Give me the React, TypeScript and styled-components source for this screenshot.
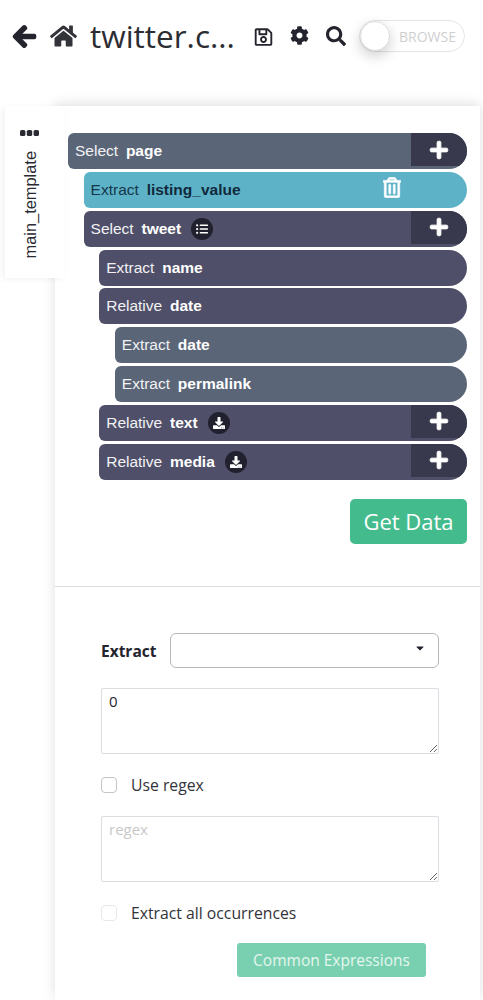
import styled, { createGlobalStyle } from "styled-components";
import {
  FaArrowLeft,
  FaCaretDown,
  FaCog,
  FaDownload,
  FaHome,
  FaListUl,
  FaPlus,
  FaRegSave,
  FaRegTrashAlt,
  FaSearch,
} from "react-icons/fa";

type RowType = {
  kind: string;
  name: string;
  level: number;
  tone?: "slate" | "indigo" | "teal";
  badge?: "list" | "download";
  canAdd?: boolean;
  canDelete?: boolean;
};

const rows: RowType[] = [
  { kind: "Select", name: "page", level: 0, tone: "slate", canAdd: true },
  { kind: "Extract", name: "listing_value", level: 1, tone: "teal", canDelete: true },
  { kind: "Select", name: "tweet", level: 1, badge: "list", canAdd: true },
  { kind: "Extract", name: "name", level: 2 },
  { kind: "Relative", name: "date", level: 2 },
  { kind: "Extract", name: "date", level: 3, tone: "slate" },
  { kind: "Extract", name: "permalink", level: 3, tone: "slate" },
  { kind: "Relative", name: "text", level: 2, badge: "download", canAdd: true },
  { kind: "Relative", name: "media", level: 2, badge: "download", canAdd: true },
];

const toneColors = {
  slate: "#5a6678",
  indigo: "#4f4f69",
  teal: "#5db2c8",
};

export default function App() {
  return (
    <>
      <GlobalStyle />
      <Header>
        <BackIcon />
        <HomeIcon />
        <Title>twitter.c...</Title>
        <SaveIcon />
        <CogIcon />
        <SearchIcon />
        <BrowseToggle>
          <ToggleKnob />
          <span>BROWSE</span>
        </BrowseToggle>
      </Header>
      <Workspace>
        <TemplateTab>
          <TabDots viewBox="0 0 19 6">
            <rect x="0" y="0" width="5.4" height="6" rx="1.6" />
            <rect x="6.8" y="0" width="5.4" height="6" rx="1.6" />
            <rect x="13.6" y="0" width="5.4" height="6" rx="1.6" />
          </TabDots>
          <span>main_template</span>
        </TemplateTab>
        <Panel>
          <TreeSection>
            <RowList>
              {rows.map((row) => (
                <Row
                  key={row.kind + row.name + row.level}
                  $level={row.level}
                  $tone={row.tone || "indigo"}
                >
                  <RowLabel $dark={row.tone === "teal"}>
                    {row.kind} <b>{row.name}</b>
                  </RowLabel>
                  {row.badge && (
                    <Badge>
                      {row.badge === "list" ? <FaListUl /> : <FaDownload />}
                    </Badge>
                  )}
                  {row.canDelete && (
                    <DeleteButton>
                      <FaRegTrashAlt />
                    </DeleteButton>
                  )}
                  {row.canAdd && (
                    <AddButton>
                      <FaPlus />
                    </AddButton>
                  )}
                </Row>
              ))}
            </RowList>
            <GetDataButton>Get Data</GetDataButton>
          </TreeSection>
          <FormSection>
            <ExtractRow>
              <strong>Extract</strong>
              <SelectBox>
                <FaCaretDown />
              </SelectBox>
            </ExtractRow>
            <TextBox defaultValue="0" />
            <CheckRow>
              <CheckBox type="checkbox" />
              <span>Use regex</span>
            </CheckRow>
            <TextBox placeholder="regex" />
            <CheckRow>
              <CheckBox type="checkbox" $faint />
              <span>Extract all occurrences</span>
            </CheckRow>
            <CommonButton>Common Expressions</CommonButton>
          </FormSection>
        </Panel>
      </Workspace>
    </>
  );
}

const GlobalStyle = createGlobalStyle`
  html, body {
    margin: 0;
    padding: 0;
    background: #ffffff;
    overflow: hidden;
  }
  body {
    height: 1000px;
    font-family: "Open Sans", "Liberation Sans", sans-serif;
    color: #24242e;
  }
`;

const Header = styled.header`
  height: 106px;
  box-sizing: border-box;
  padding: 18px 17px 0 12px;
  display: flex;
  align-items: flex-start;
  color: #24242e;
`;

const BackIcon = styled(FaArrowLeft)`
  width: 25px;
  height: 25px;
  margin-top: 6px;
  stroke: currentColor;
  stroke-width: 36px;
`;

const HomeIcon = styled(FaHome)`
  width: 27px;
  height: 24px;
  margin: 6px 0 0 13px;
  color: #33333a;
`;

const Title = styled.div`
  margin: -2px 0 0 13px;
  width: 164px;
  font-size: 31.5px;
  line-height: 40px;
  white-space: nowrap;
  color: #2c2c33;
`;

const SaveIcon = styled(FaRegSave)`
  width: 19px;
  height: 20px;
  margin-top: 9px;
`;

const CogIcon = styled(FaCog)`
  width: 19px;
  height: 19px;
  margin: 8px 0 0 17px;
`;

const SearchIcon = styled(FaSearch)`
  width: 20px;
  height: 20px;
  margin: 8px 0 0 17px;
`;

const BrowseToggle = styled.div`
  width: 106px;
  height: 32px;
  margin: 2px 0 0 13px;
  box-sizing: border-box;
  flex: none;
  border: 1px solid #e6e6e6;
  border-radius: 16px;
  display: flex;
  align-items: center;
  justify-content: space-between;
  padding-right: 8px;
  font-size: 14px;
  color: #cfcfcf;
`;

const ToggleKnob = styled.div`
  width: 30px;
  height: 30px;
  box-sizing: border-box;
  border-radius: 50%;
  background: #ffffff;
  border: 1px solid #dddddd;
  box-shadow: 0 5px 14px rgba(0, 0, 0, 0.2);
`;

const Workspace = styled.main`
  display: flex;
  align-items: flex-start;
  padding: 0 3px 0 5px;
`;

const TemplateTab = styled.div`
  position: relative;
  z-index: 1;
  width: 60px;
  height: 172px;
  margin-right: -10px;
  flex: none;
  background: #ffffff;
  box-shadow: -2px 1px 6px rgba(0, 0, 0, 0.06);
  display: flex;
  flex-direction: column;
  align-items: flex-start;
  padding: 24px 0 0 15px;
  box-sizing: border-box;
  color: #2a2a33;

  span {
    margin: 15px 0 0 0;
    writing-mode: vertical-rl;
    transform: rotate(180deg);
    font-family: "Liberation Sans", Arial, sans-serif;
    font-size: 16.4px;
    line-height: 20px;
  }
`;

const TabDots = styled.svg`
  width: 19px;
  height: 6px;
  flex: none;
  fill: #2a2a33;
`;

const Panel = styled.section`
  flex: 1;
  height: 894px;
  background: #ffffff;
  box-shadow: 0 -2px 12px rgba(0, 0, 0, 0.13);
`;

const TreeSection = styled.div`
  height: 481px;
  box-sizing: border-box;
  padding: 27px 13px 0 13px;
  border-bottom: 1px solid #dddddd;
  display: flex;
  flex-direction: column;
  align-items: flex-end;
`;

const RowList = styled.div`
  align-self: stretch;
  display: grid;
  grid-auto-rows: 36px;
  row-gap: 2.85px;
`;

const Row = styled.div<{ $level: number; $tone: keyof typeof toneColors }>`
  position: relative;
  margin-left: ${(p) => p.$level * 15.6}px;
  padding-left: 7px;
  display: flex;
  align-items: center;
  overflow: hidden;
  background: ${(p) => toneColors[p.$tone]};
  border-radius: 6px 18px 18px 6px;
`;

const RowLabel = styled.div<{ $dark: boolean }>`
  font-family: "Liberation Sans", Arial, sans-serif;
  font-size: 15.5px;
  word-spacing: 3.5px;
  white-space: nowrap;
  color: ${(p) => (p.$dark ? "#15384a" : "#f2f2f4")};

  b {
    color: ${(p) => (p.$dark ? "#102a3c" : "#ffffff")};
  }
`;

const Badge = styled.div`
  width: 22px;
  height: 22px;
  margin-left: 10px;
  border-radius: 50%;
  background: #20202e;
  color: #ffffff;
  display: flex;
  align-items: center;
  justify-content: center;

  svg {
    width: 12px;
    height: 12px;
  }
`;

const DeleteButton = styled.div`
  position: absolute;
  left: 299px;
  top: 5px;
  color: #ffffff;

  svg {
    width: 18px;
    height: 21px;
    display: block;
    stroke: currentColor;
    stroke-width: 16px;
  }
`;

const AddButton = styled.div`
  position: absolute;
  top: 0;
  right: 0;
  width: 56px;
  height: 33px;
  background: #39394d;
  color: #ffffff;
  display: flex;
  align-items: center;
  justify-content: center;

  svg {
    width: 20px;
    height: 20px;
    stroke: currentColor;
    stroke-width: 24px;
  }
`;

const GetDataButton = styled.button`
  width: 117px;
  height: 45px;
  margin-top: 19px;
  border: none;
  border-radius: 5px;
  background: #43bb8c;
  color: #ffffff;
  font-family: "Open Sans", sans-serif;
  font-size: 22px;
  padding: 0;
`;

const FormSection = styled.div`
  padding: 46px 41px 0 46px;
  display: flex;
  flex-direction: column;
  font-size: 15.75px;
`;

const ExtractRow = styled.div`
  display: flex;
  align-items: center;
  gap: 14px;

  strong {
    font-size: 15.5px;
    font-weight: 700;
    color: #24242e;
  }
`;

const SelectBox = styled.div`
  flex: 1;
  height: 35px;
  box-sizing: border-box;
  border: 1px solid #b4b8bc;
  border-radius: 6px;
  display: flex;
  justify-content: flex-end;
  padding: 8px 12px 0 0;
  color: #24242e;

  svg {
    width: 12px;
    height: 12px;
  }
`;

const TextBox = styled.textarea`
  display: block;
  height: 66px;
  margin-top: 20px;
  box-sizing: border-box;
  border: 1px solid #dcdce3;
  border-radius: 2px;
  padding: 2px 7px;
  font-family: "Open Sans", sans-serif;
  font-size: 15px;
  color: #24242e;
  outline: none;

  &::placeholder {
    color: #c8c8c8;
  }
`;

const CheckRow = styled.label`
  display: flex;
  align-items: center;
  gap: 14px;
  height: 16px;
  margin-top: 23px;
  color: #33333a;

  & + textarea {
    margin-top: 23px;
  }
`;

const CheckBox = styled.input<{ $faint?: boolean }>`
  appearance: none;
  width: 16px;
  height: 16px;
  margin: 0;
  box-sizing: border-box;
  border: 1px solid ${(p) => (p.$faint ? "#e8e8e8" : "#c4c4c8")};
  border-radius: 4px;
  background: #ffffff;
`;

const CommonButton = styled.button`
  width: 189px;
  height: 34px;
  margin: 22px 13px 0 0;
  align-self: flex-end;
  border: none;
  border-radius: 3px;
  background: #78d0b0;
  color: #e6f6ef;
  font-family: "Open Sans", sans-serif;
  font-size: 15.5px;
  padding: 0;
`;
